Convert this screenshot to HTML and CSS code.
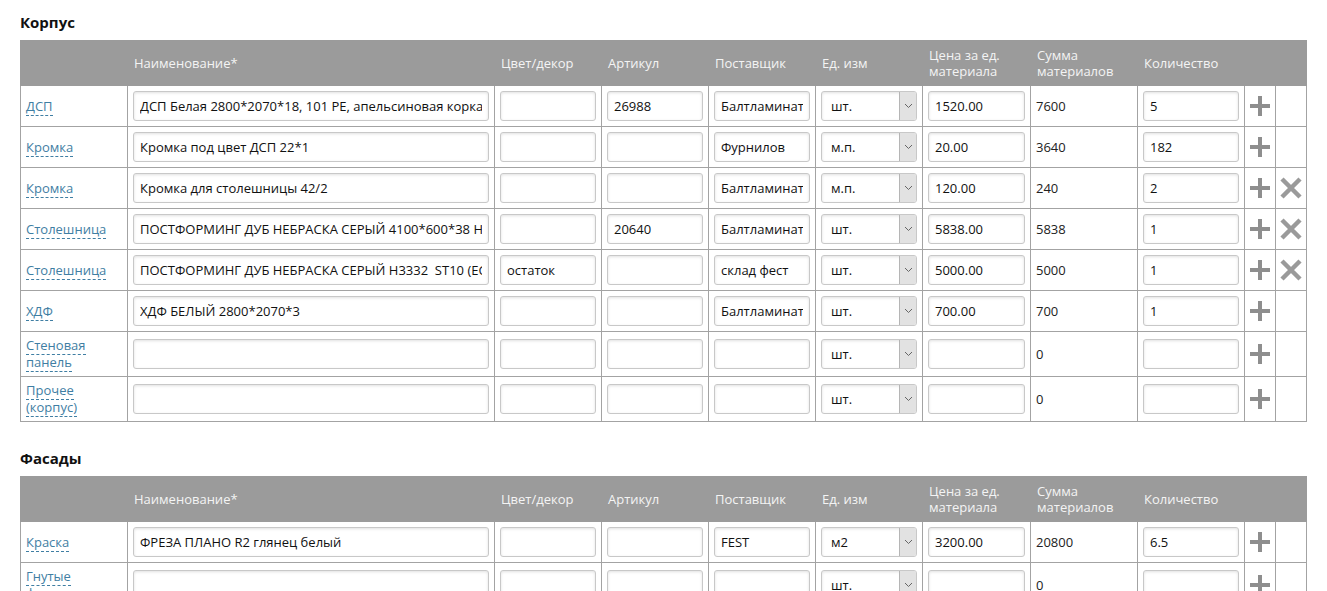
FILE: index.html
```html
<!DOCTYPE html>
<html lang="ru">
  <head>
    <meta charset="UTF-8" />
    <meta name="viewport" content="width=device-width, initial-scale=1.0" />
    <title>Материалы</title>
    <link rel="stylesheet" href="styles.css">
  </head>
  <body>
    <h2>Корпус</h2>
    <table class="materials">
      <colgroup>
        <col class="c-type"><col class="c-name"><col class="c-std"><col class="c-std"><col class="c-std"><col class="c-std"><col class="c-price"><col class="c-std"><col class="c-std"><col class="c-act"><col class="c-act">
      </colgroup>
      <thead>
        <tr>
          <th></th>
          <th>Наименование*</th>
          <th>Цвет/декор</th>
          <th>Артикул</th>
          <th>Поставщик</th>
          <th>Ед. изм</th>
          <th>Цена за ед.<br>материала</th>
          <th>Сумма<br>материалов</th>
          <th>Количество</th>
          <th></th>
          <th></th>
        </tr>
      </thead>
      <tbody>
        <tr>
          <td><a class="type" href="#">ДСП</a></td>
          <td><input type="text" value="ДСП Белая 2800*2070*18, 101 PE, апельсиновая корка  (Egger)"></td>
          <td><input type="text" value=""></td>
          <td><input type="text" value="26988"></td>
          <td><input type="text" value="Балтламинат"></td>
          <td><div class="sel"><select><option>шт.</option></select><span class="sel-btn"><svg width="9" height="6" viewBox="0 0 9 6"><path d="M1 1l3.5 3.5L8 1" fill="none" stroke="#666" stroke-width="1"/></svg></span></div></td>
          <td><input type="text" value="1520.00"></td>
          <td>7600</td>
          <td><input type="text" value="5"></td>
          <td class="act"><svg class="plus" width="20" height="20" viewBox="0 0 20 20"><rect x="8" y="0" width="4" height="20"/><rect x="0" y="8" width="20" height="4"/></svg></td>
          <td class="act"></td>
        </tr>
        <tr>
          <td><a class="type" href="#">Кромка</a></td>
          <td><input type="text" value="Кромка под цвет ДСП 22*1"></td>
          <td><input type="text" value=""></td>
          <td><input type="text" value=""></td>
          <td><input type="text" value="Фурнилов"></td>
          <td><div class="sel"><select><option>м.п.</option></select><span class="sel-btn"><svg width="9" height="6" viewBox="0 0 9 6"><path d="M1 1l3.5 3.5L8 1" fill="none" stroke="#666" stroke-width="1"/></svg></span></div></td>
          <td><input type="text" value="20.00"></td>
          <td>3640</td>
          <td><input type="text" value="182"></td>
          <td class="act"><svg class="plus" width="20" height="20" viewBox="0 0 20 20"><rect x="8" y="0" width="4" height="20"/><rect x="0" y="8" width="20" height="4"/></svg></td>
          <td class="act"></td>
        </tr>
        <tr>
          <td><a class="type" href="#">Кромка</a></td>
          <td><input type="text" value="Кромка для столешницы 42/2"></td>
          <td><input type="text" value=""></td>
          <td><input type="text" value=""></td>
          <td><input type="text" value="Балтламинат"></td>
          <td><div class="sel"><select><option>м.п.</option></select><span class="sel-btn"><svg width="9" height="6" viewBox="0 0 9 6"><path d="M1 1l3.5 3.5L8 1" fill="none" stroke="#666" stroke-width="1"/></svg></span></div></td>
          <td><input type="text" value="120.00"></td>
          <td>240</td>
          <td><input type="text" value="2"></td>
          <td class="act"><svg class="plus" width="20" height="20" viewBox="0 0 20 20"><rect x="8" y="0" width="4" height="20"/><rect x="0" y="8" width="20" height="4"/></svg></td>
          <td class="act"><svg class="del" width="22" height="22" viewBox="0 0 22 22"><path d="M2 2L20 20M20 2L2 20"/></svg></td>
        </tr>
        <tr>
          <td><a class="type" href="#">Столешница</a></td>
          <td><input type="text" value="ПОСТФОРМИНГ ДУБ НЕБРАСКА СЕРЫЙ 4100*600*38 H3332 ST10 (EGGER)"></td>
          <td><input type="text" value=""></td>
          <td><input type="text" value="20640"></td>
          <td><input type="text" value="Балтламинат"></td>
          <td><div class="sel"><select><option>шт.</option></select><span class="sel-btn"><svg width="9" height="6" viewBox="0 0 9 6"><path d="M1 1l3.5 3.5L8 1" fill="none" stroke="#666" stroke-width="1"/></svg></span></div></td>
          <td><input type="text" value="5838.00"></td>
          <td>5838</td>
          <td><input type="text" value="1"></td>
          <td class="act"><svg class="plus" width="20" height="20" viewBox="0 0 20 20"><rect x="8" y="0" width="4" height="20"/><rect x="0" y="8" width="20" height="4"/></svg></td>
          <td class="act"><svg class="del" width="22" height="22" viewBox="0 0 22 22"><path d="M2 2L20 20M20 2L2 20"/></svg></td>
        </tr>
        <tr>
          <td><a class="type" href="#">Столешница</a></td>
          <td><input type="text" value="ПОСТФОРМИНГ ДУБ НЕБРАСКА СЕРЫЙ H3332  ST10 (EGGER)"></td>
          <td><input type="text" value="остаток"></td>
          <td><input type="text" value=""></td>
          <td><input type="text" value="склад фест"></td>
          <td><div class="sel"><select><option>шт.</option></select><span class="sel-btn"><svg width="9" height="6" viewBox="0 0 9 6"><path d="M1 1l3.5 3.5L8 1" fill="none" stroke="#666" stroke-width="1"/></svg></span></div></td>
          <td><input type="text" value="5000.00"></td>
          <td>5000</td>
          <td><input type="text" value="1"></td>
          <td class="act"><svg class="plus" width="20" height="20" viewBox="0 0 20 20"><rect x="8" y="0" width="4" height="20"/><rect x="0" y="8" width="20" height="4"/></svg></td>
          <td class="act"><svg class="del" width="22" height="22" viewBox="0 0 22 22"><path d="M2 2L20 20M20 2L2 20"/></svg></td>
        </tr>
        <tr>
          <td><a class="type" href="#">ХДФ</a></td>
          <td><input type="text" value="ХДФ БЕЛЫЙ 2800*2070*3"></td>
          <td><input type="text" value=""></td>
          <td><input type="text" value=""></td>
          <td><input type="text" value="Балтламинат"></td>
          <td><div class="sel"><select><option>шт.</option></select><span class="sel-btn"><svg width="9" height="6" viewBox="0 0 9 6"><path d="M1 1l3.5 3.5L8 1" fill="none" stroke="#666" stroke-width="1"/></svg></span></div></td>
          <td><input type="text" value="700.00"></td>
          <td>700</td>
          <td><input type="text" value="1"></td>
          <td class="act"><svg class="plus" width="20" height="20" viewBox="0 0 20 20"><rect x="8" y="0" width="4" height="20"/><rect x="0" y="8" width="20" height="4"/></svg></td>
          <td class="act"></td>
        </tr>
        <tr>
          <td><a class="type" href="#">Стеновая панель</a></td>
          <td><input type="text" value=""></td>
          <td><input type="text" value=""></td>
          <td><input type="text" value=""></td>
          <td><input type="text" value=""></td>
          <td><div class="sel"><select><option>шт.</option></select><span class="sel-btn"><svg width="9" height="6" viewBox="0 0 9 6"><path d="M1 1l3.5 3.5L8 1" fill="none" stroke="#666" stroke-width="1"/></svg></span></div></td>
          <td><input type="text" value=""></td>
          <td>0</td>
          <td><input type="text" value=""></td>
          <td class="act"><svg class="plus" width="20" height="20" viewBox="0 0 20 20"><rect x="8" y="0" width="4" height="20"/><rect x="0" y="8" width="20" height="4"/></svg></td>
          <td class="act"></td>
        </tr>
        <tr>
          <td><a class="type" href="#">Прочее (корпус)</a></td>
          <td><input type="text" value=""></td>
          <td><input type="text" value=""></td>
          <td><input type="text" value=""></td>
          <td><input type="text" value=""></td>
          <td><div class="sel"><select><option>шт.</option></select><span class="sel-btn"><svg width="9" height="6" viewBox="0 0 9 6"><path d="M1 1l3.5 3.5L8 1" fill="none" stroke="#666" stroke-width="1"/></svg></span></div></td>
          <td><input type="text" value=""></td>
          <td>0</td>
          <td><input type="text" value=""></td>
          <td class="act"><svg class="plus" width="20" height="20" viewBox="0 0 20 20"><rect x="8" y="0" width="4" height="20"/><rect x="0" y="8" width="20" height="4"/></svg></td>
          <td class="act"></td>
        </tr>
      </tbody>
    </table>

    <h2 class="next">Фасады</h2>
    <table class="materials">
      <colgroup>
        <col class="c-type"><col class="c-name"><col class="c-std"><col class="c-std"><col class="c-std"><col class="c-std"><col class="c-price"><col class="c-std"><col class="c-std"><col class="c-act"><col class="c-act">
      </colgroup>
      <thead>
        <tr>
          <th></th>
          <th>Наименование*</th>
          <th>Цвет/декор</th>
          <th>Артикул</th>
          <th>Поставщик</th>
          <th>Ед. изм</th>
          <th>Цена за ед.<br>материала</th>
          <th>Сумма<br>материалов</th>
          <th>Количество</th>
          <th></th>
          <th></th>
        </tr>
      </thead>
      <tbody>
        <tr>
          <td><a class="type" href="#">Краска</a></td>
          <td><input type="text" value="ФРЕЗА ПЛАНО R2 глянец белый"></td>
          <td><input type="text" value=""></td>
          <td><input type="text" value=""></td>
          <td><input type="text" value="FEST"></td>
          <td><div class="sel"><select><option>м2</option></select><span class="sel-btn"><svg width="9" height="6" viewBox="0 0 9 6"><path d="M1 1l3.5 3.5L8 1" fill="none" stroke="#666" stroke-width="1"/></svg></span></div></td>
          <td><input type="text" value="3200.00"></td>
          <td>20800</td>
          <td><input type="text" value="6.5"></td>
          <td class="act"><svg class="plus" width="20" height="20" viewBox="0 0 20 20"><rect x="8" y="0" width="4" height="20"/><rect x="0" y="8" width="20" height="4"/></svg></td>
          <td class="act"></td>
        </tr>
        <tr>
          <td><a class="type" href="#">Гнутые<br>фасады</a></td>
          <td><input type="text" value=""></td>
          <td><input type="text" value=""></td>
          <td><input type="text" value=""></td>
          <td><input type="text" value=""></td>
          <td><div class="sel"><select><option>шт.</option></select><span class="sel-btn"><svg width="9" height="6" viewBox="0 0 9 6"><path d="M1 1l3.5 3.5L8 1" fill="none" stroke="#666" stroke-width="1"/></svg></span></div></td>
          <td><input type="text" value=""></td>
          <td>0</td>
          <td><input type="text" value=""></td>
          <td class="act"><svg class="plus" width="20" height="20" viewBox="0 0 20 20"><rect x="8" y="0" width="4" height="20"/><rect x="0" y="8" width="20" height="4"/></svg></td>
          <td class="act"></td>
        </tr>
      </tbody>
    </table>
  </body>
</html>
```

FILE: styles.css
```css
body {
  font-family: "Open Sans", Arial, sans-serif;
  font-size: 13px;
  color: #222;
  margin: 0;
  padding: 0 20px;
  background: #fff;
}
h2 {
  font-size: 15px;
  font-weight: bold;
  color: #111;
  margin: 0;
  padding: 12px 0 0;
  height: 28px;
  line-height: 20px;
}
h2.next {
  margin-top: 10px;
  padding-top: 16px;
}
.materials {
  border-collapse: collapse;
  table-layout: fixed;
  width: 1287px;
}
.c-type { width: 107px; }
.c-name { width: 367px; }
.c-std { width: 107px; }
.c-price { width: 108px; }
.c-act { width: 31px; }
.materials th {
  background: #9b9b9b;
  color: #f4f4f4;
  font-weight: normal;
  text-align: left;
  padding: 0 6px;
  height: 44px;
  line-height: 16px;
  vertical-align: middle;
  border: 1px solid #9b9b9b;
}
.materials td {
  border: 1px solid #a3a3a3;
  padding: 5px;
  height: 30px;
  line-height: 17px;
  vertical-align: middle;
}
.materials td.act {
  padding: 0;
  text-align: center;
}
a.type {
  color: #3f7ea3;
  text-decoration: none;
  border-bottom: 1px dashed #3f7ea3;
}
input[type="text"] {
  box-sizing: border-box;
  width: 100%;
  height: 30px;
  border: 1px solid #c8c8c8;
  border-radius: 3px;
  padding: 0 6px;
  font-family: inherit;
  font-size: 13px;
  color: #111;
  background: #fff;
  box-shadow: inset 0 1px 3px rgba(0, 0, 0, 0.12);
  display: block;
}
.sel {
  position: relative;
  height: 30px;
}
.sel select {
  box-sizing: border-box;
  width: 100%;
  height: 30px;
  border: 1px solid #c8c8c8;
  border-radius: 3px;
  padding: 0 9px;
  font-family: inherit;
  font-size: 13px;
  color: #111;
  background: #fff;
  appearance: none;
  -webkit-appearance: none;
  box-shadow: inset 0 1px 3px rgba(0, 0, 0, 0.12);
  display: block;
}
.sel-btn {
  position: absolute;
  top: 1px;
  right: 1px;
  bottom: 1px;
  width: 16px;
  background: #e2e2e2;
  border-left: 1px solid #b5b5b5;
  border-radius: 0 2px 2px 0;
  display: flex;
  align-items: center;
  justify-content: center;
}
.plus {
  display: block;
  margin: 0 auto;
  fill: #8e8e8e;
}
.del {
  display: block;
  margin: 0 auto;
  stroke: #9a9a9a;
  stroke-width: 4.5;
  fill: none;
}
```
